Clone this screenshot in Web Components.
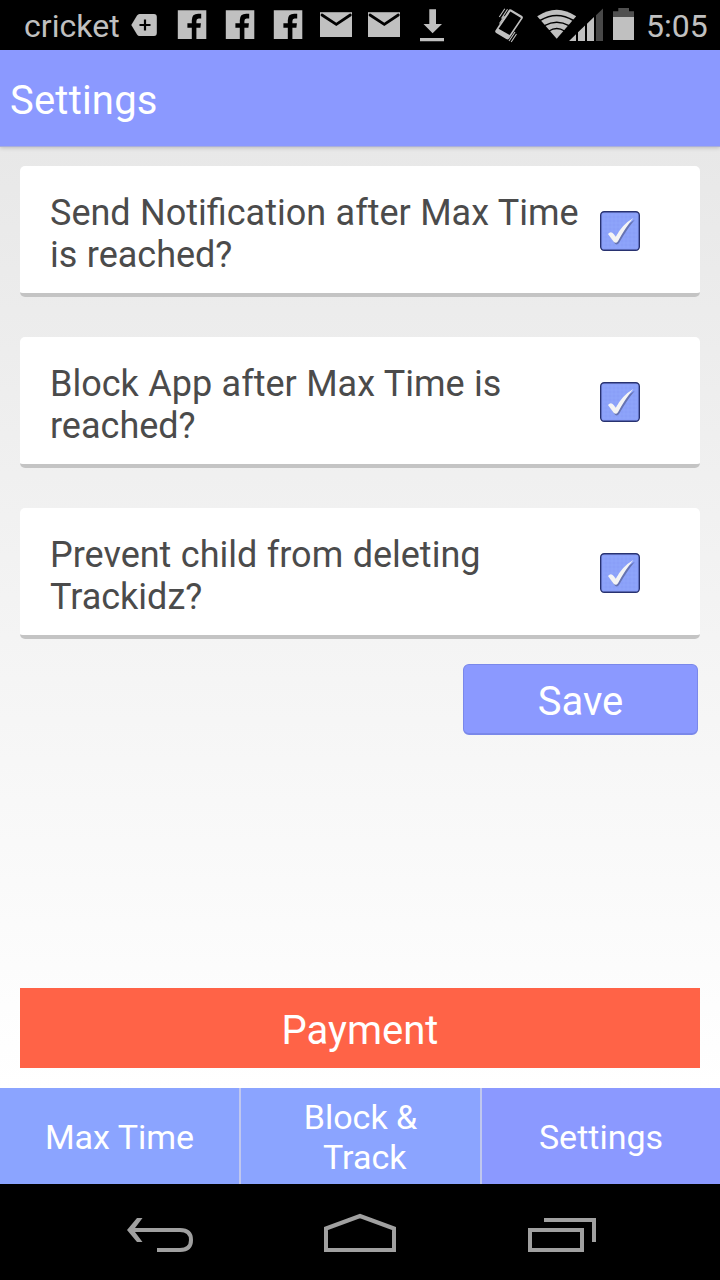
<!DOCTYPE html>
<html lang="en">
<head>
<meta charset="utf-8">
<title>Settings</title>
<style>
html,body{margin:0;padding:0;background:#000}
body{font-family:Roboto,"Noto Sans",sans-serif}
</style>
</head>
<body>
<app-screen></app-screen>
<script>
function define(name, html) {
  customElements.define(name, class extends HTMLElement {
    constructor() {
      super();
      const t = document.createElement('template');
      t.innerHTML = html;
      this.attachShadow({mode: 'open'}).appendChild(t.content.cloneNode(true));
    }
  });
}

define('fb-icon', `<style>:host{display:block;width:48px;height:50px}svg{display:block}</style>
<svg width="48" height="50"><path fill="#c0c0c0" d="M9.8 10.3H38.3V39H28.4V27.8H32.4L32.9 23.2H28.4V21Q28.4 18.4 30.6 18.4H33.2V13.8H30.2Q23.8 13.8 23.8 20.2V23.2H19.4V27.8H23.8V39H9.8Z"/></svg>`);

define('mail-icon', `<style>:host{display:block;width:48px;height:50px}svg{display:block}</style>
<svg width="48" height="50"><path fill="#c0c0c0" d="M8 12.2H40V37H8Z"/><path fill="none" stroke="#000" stroke-width="2.8" stroke-linecap="round" d="M10 15L24.3 24.3L38.3 15"/></svg>`);

define('download-icon', `<style>:host{display:block;width:48px;height:50px}svg{display:block}</style>
<svg width="48" height="50"><path fill="#c0c0c0" d="M21.3 9.3H28V24H34L24.6 33.2L15.5 24H21.3ZM12 38H36V41.3H12Z"/></svg>`);

define('status-bar', `<style>
:host{display:flex;height:50px;background:#000;color:#c0c0c0;align-items:center;box-sizing:border-box;padding:0 12px 0 24px;font-size:32px;line-height:50px}
.carrier{width:107px;white-space:nowrap;letter-spacing:.05px}
.tag{width:37px}
svg{display:block}
.sys{margin-left:auto;width:152px}
.clock{width:62px;white-space:nowrap;letter-spacing:0;margin-top:2px}
.carrier{margin-top:2px}
</style>
<span class="carrier">cricket</span>
<svg class="tag" width="37" height="50" viewBox="131 0 37 50"><path fill="#c0c0c0" d="M139.5 14H154Q156.8 14 156.8 17V33Q156.8 36 154 36H139.5Q138 36 137 34.5L131.3 25L137 15.5Q138 14 139.5 14Z"/><path stroke="#000" stroke-width="2.2" fill="none" d="M139.5 25H150.5M145 19.5V30.5"/></svg>
<fb-icon></fb-icon><fb-icon></fb-icon><fb-icon></fb-icon><mail-icon></mail-icon><mail-icon></mail-icon><download-icon></download-icon>
<svg class="sys" width="152" height="50" viewBox="494 0 152 50">
<path fill="#c0c0c0" fill-rule="evenodd" d="M508.6 10.2Q509.5 8.6 511.2 9.6L521.8 15.8Q523.5 17 522.6 18.6L509.2 38.4Q508 40.2 506.2 39L496.2 33Q494.5 31.8 495.6 30.2ZM510.4 11.6L498.6 28.8L509.6 35L521 17.9Z"/>
<path stroke="#c0c0c0" stroke-width="1.1" fill="none" d="M499.3 17L504.8 8.8M501.5 18.5L507.5 9.2M499.5 23.5L504.5 16M509 41L515 32M511.2 42L516.5 34"/>
<path fill="#c0c0c0" d="M537.2 16.2Q556.7 3.2 576.2 16.2L556.7 38.8Z"/>
<path fill="none" stroke="#000" stroke-width="1.5" d="M540 20.5Q556.7 10.5 573.5 20.5M544.5 25.7Q556.7 18.6 569 25.7M549 31Q556.7 25.8 564.5 31"/>
<path fill="#c0c0c0" d="M569 41L576 34.3V41ZM578 41V32.2L585 25.5V41ZM587 41V23.7L594 17V41Z"/><path fill="#484848" d="M596 41V15.2L603 8.5V41Z"/>
<path fill="#505050" d="M613 17V11.3H618.3V8H629V11.3H634V17Z"/><path fill="#c0c0c0" d="M613 17H634V40H613Z"/>
</svg>
<span class="clock">5:05</span>`);

define('title-bar', `<style>
:host{display:flex;align-items:center;height:97px;box-sizing:border-box;padding:5px 10px 0;background:#8b99ff;border-bottom:1px solid #a9afdc;box-shadow:0 1px 4px rgba(0,0,0,.18);color:#fff;font-size:40px;letter-spacing:.2px}
</style><slot></slot>`);

define('check-box', `<style>:host{display:block;width:40px;height:40px;flex:none}svg{display:block}</style>
<svg width="40" height="40" viewBox="0 0 40 40">
<rect x=".7" y=".7" width="38.6" height="38.6" rx="3.5" fill="#8a9ff8" stroke="#283270" stroke-width="1.4"/>
<path stroke="#97b0ff" stroke-width="1" opacity=".4" d="M4 3V37M8 3V37M12 3V37M16 3V37M20 3V37M24 3V37M28 3V37M32 3V37M36 3V37M3 4H37M3 8H37M3 12H37M3 16H37M3 20H37M3 24H37M3 28H37M3 32H37M3 36H37"/>
<path fill="#5c68a0" opacity=".8" d="M9.5 24.2Q12 21 14.7 25L16.5 27.5Q23 15.5 34.8 8.8Q27 18 19 32Q17 34.5 14.8 32.5Z"/>
<path fill="#f4f4f4" d="M8 23Q10.8 19.4 13.7 23L15.8 25.8Q22 13.5 33.4 7Q25.4 16.5 18 30.2Q16 33 13.6 30.7Z"/></svg>`);

define('setting-card', `<style>
:host{display:flex;align-items:center;height:131px;box-sizing:border-box;padding:0 60px 0 30px;background:#fff;border-bottom:4px solid #c4c4c4;border-radius:5px;color:#4b4b4b;font-size:36px;line-height:42px}
p{margin:9px 0 0;width:550px;white-space:nowrap;word-spacing:.5px}
check-box{margin-top:2px}
</style><p><slot></slot></p><check-box></check-box>`);

define('save-button', `<style>
:host{display:flex;align-items:center;justify-content:center;box-sizing:border-box;width:235px;height:71px;padding-top:4px;background:#8b99ff;border:1px solid #7a88ea;border-bottom-width:2px;border-radius:6px;color:#fff;font-size:40px}
</style><slot></slot>`);

define('payment-button', `<style>
:host{display:flex;align-items:center;justify-content:center;box-sizing:border-box;height:80px;padding-top:4px;background:#ff6347;color:#fff;font-size:40px}
</style><slot></slot>`);

define('nav-tab', `<style>
:host{display:flex;align-items:center;justify-content:center;text-align:center;box-sizing:border-box;height:96px;padding-top:2px;background:#8ba4ff;border-right:2px solid #c0c7ee;color:#fff;font-size:34px;line-height:40px;white-space:nowrap}
:host([active]){background:#8b99ff;border-right:0}
</style><span><slot></slot></span>`);

define('tab-row', `<style>:host{display:grid;grid-template-columns:241px 241px 238px}</style><slot></slot>`);

define('system-nav', `<style>:host{display:block;height:96px;background:#000}svg{display:block}</style>
<svg width="720" height="96" viewBox="0 1184 720 96" fill="none" stroke="#a0a0a0" stroke-width="4">
<path d="M130 1230H180Q191 1230 191 1240Q191 1250 180 1250H157"/><path fill="#a0a0a0" stroke="none" d="M137 1218H142.5L133.5 1230L142.5 1242H137L127 1230Z"/>
<path d="M326 1250V1228.5L360 1216L394 1228.5V1250Z"/>
<path d="M530 1230H582V1250H530ZM544 1220H594V1242"/></svg>`);

define('app-screen', `<style>
:host{display:flex;flex-direction:column;width:720px;height:1280px;overflow:hidden}
title-bar{position:relative}
main{flex:1;display:flex;flex-direction:column;box-sizing:border-box;padding:19px 20px 20px;background:linear-gradient(#e8e8e8,#fff)}
.cards{display:flex;flex-direction:column;gap:40px}
save-button{align-self:flex-end;margin:25px 2px 0 0}
payment-button{margin-top:auto}
</style>
<status-bar></status-bar><title-bar>Settings</title-bar>
<main><div class="cards">
<setting-card>Send Notification after Max Time<br>is reached?</setting-card>
<setting-card>Block App after Max Time is<br>reached?</setting-card>
<setting-card>Prevent child from deleting<br>Trackidz?</setting-card></div>
<save-button>Save</save-button>
<payment-button>Payment</payment-button></main>
<tab-row><nav-tab>Max Time</nav-tab><nav-tab>Block &amp;<br>&nbsp;Track</nav-tab><nav-tab active>Settings</nav-tab></tab-row>
<system-nav></system-nav>`);
</script>
</body>
</html>
